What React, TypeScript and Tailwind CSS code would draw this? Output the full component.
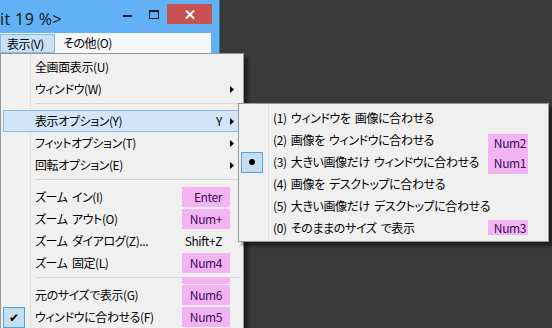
import type { ReactNode } from 'react';

type MenuRow =
  | { sep: true; pink?: boolean }
  | {
      sep?: false;
      label: string;
      shortcut?: string;
      pink?: boolean;
      arrow?: boolean;
      active?: boolean;
      check?: boolean;
    };

const font =
  "font-['Meiryo_UI','Noto_Sans_CJK_JP',sans-serif] [font-feature-settings:'palt'] tracking-[-0.4px] [word-spacing:2px] text-[12px] text-black";

const rows: MenuRow[] = [
  { label: '全画面表示(U)' },
  { label: 'ウィンドウ(W)', arrow: true },
  { sep: true },
  { label: '表示オプション(Y)', shortcut: 'Y', arrow: true, active: true },
  { label: 'フィットオプション(T)', arrow: true },
  { label: '回転オプション(E)', arrow: true },
  { sep: true },
  { label: 'ズーム イン(I)', shortcut: 'Enter', pink: true },
  { label: 'ズーム アウト(O)', shortcut: 'Num+', pink: true },
  { label: 'ズーム ダイアログ(Z)...', shortcut: 'Shift+Z' },
  { label: 'ズーム 固定(L)', shortcut: 'Num4', pink: true },
  { sep: true, pink: true },
  { label: '元のサイズで表示(G)', shortcut: 'Num6', pink: true },
  { label: 'ウィンドウに合わせる(F)', shortcut: 'Num5', pink: true, check: true },
  { sep: true },
];

// submenu of 表示オプション
const subRows = [
  { label: '(1) ウィンドウを 画像に合わせる' },
  { label: '(2) 画像を ウィンドウに合わせる', shortcut: 'Num2', pinkClass: 'mt-[4px] h-[18px]' },
  { label: '(3) 大きい画像だけ ウィンドウに合わせる', shortcut: 'Num1', pinkClass: 'h-[22px]', bullet: true },
  { label: '(4) 画像を デスクトップに合わせる' },
  { label: '(5) 大きい画像だけ デスクトップに合わせる' },
  { label: '(0) そのままのサイズ で表示', shortcut: 'Num3', pinkClass: 'mt-[2px] h-[15px]' },
];

const Arrow = () => (
  <svg width="4" height="7" viewBox="0 0 4 7" className="block">
    <polygon points="0,0 4,3.5 0,7" fill="#000" />
  </svg>
);

const TitleBar = () => (
  <div className="flex h-[33px] items-start bg-[#62b1f6]">
    <span className="mt-[9px] font-['Open_Sans',sans-serif] text-[16px] leading-[20px] tracking-[0.4px] text-[#111]">
      it 19 %&gt;
    </span>
    <div className="ml-auto flex items-start">
      {/* minimize */}
      <div className="mt-[15px] h-[2px] w-[9px] bg-[#1a1a1a]" />
      {/* maximize */}
      <div className="ml-[17px] mt-[10px] h-[9px] w-[10px] border border-t-2 border-[#1a1a1a]" />
      {/* close */}
      <div className="ml-[8px] mt-[4px] flex h-[20px] w-[45px] items-center justify-center bg-[#c75050]">
        <svg width="10" height="9" viewBox="0 0 10 9">
          <path d="M1 0.5 L9 8.5 M9 0.5 L1 8.5" stroke="#fff" strokeWidth="2" />
        </svg>
      </div>
      <div className="w-[7px]" />
    </div>
  </div>
);

const MenuBar = () => (
  <div className={`flex h-[20px] items-stretch bg-[#f5f6f8] ${font}`}>
    <div className="mt-px flex h-[19px] w-[55px] items-center border border-[#84b9eb] bg-[#c9e0f7] pl-[6px]">表示(V)</div>
    <div className="flex items-center pl-[8px]">その他(O)</div>
  </div>
);

const Separator = ({ pink }: { pink?: boolean }) => (
  <div className="relative h-[7px]">
    <div className="ml-[34px] mr-[2px] mt-[3px] h-px bg-[#d7d7d7]" />
    {pink && <div className="absolute left-[181px] top-0 h-full w-[48px] bg-[#f3b4f3]" />}
  </div>
);

const MainMenu = () => (
  <div
    className={`absolute left-0 top-[53px] h-[290px] w-[244px] border border-[#979797] bg-[#f0f0f0] pt-[2px] shadow-[4px_4px_3px_rgba(0,0,0,0.45)] ${font}`}
  >
    {/* gutter line */}
    <div className="absolute left-[29px] top-0 h-full w-px bg-[#e0e0e0]" />
    <div className="relative">
      {rows.map((r, i) =>
        r.sep ? (
          <Separator key={i} pink={r.pink} />
        ) : (
          <div
            key={i}
            className={`mx-[2px] flex h-[22px] items-center border ${
              r.active ? 'border-[#8bb9e6] bg-[#d3e5f6]' : 'border-transparent'
            }`}
          >
            <div className="flex h-full w-[31px] items-center">
              {r.check && (
                <span className="-ml-px flex h-[21px] w-[22px] items-center justify-center border border-[#4ea3e4] bg-[#c5dff1] text-[12px]">
                  ✔
                </span>
              )}
            </div>
            <div className="w-[147px] whitespace-nowrap">{r.label}</div>
            <div
              className={`flex h-full w-[48px] items-center justify-end pr-[8px] ${
                r.pink ? 'bg-[#f3b4f3] text-[#3d0a5c]' : ''
              }`}
            >
              {r.shortcut}
            </div>
            <div className="flex w-[10px] items-center">{r.arrow && <Arrow />}</div>
          </div>
        ),
      )}
    </div>
  </div>
);

const SubMenu = () => (
  <div
    className={`absolute left-[238px] top-[103px] h-[139px] w-[311px] border border-[#979797] bg-[#f0f0f0] pt-[3px] shadow-[4px_4px_3px_rgba(0,0,0,0.45)] ${font}`}
  >
    <div className="absolute left-[29px] top-0 h-full w-px bg-[#e0e0e0]" />
    <div className="relative">
      {subRows.map((r, i) => (
        <div key={i} className="mx-[2px] flex h-[22px] items-center border border-transparent">
          <div className="flex h-full w-[31px] items-center">
            {r.bullet && (
              <span className="-ml-px flex h-[21px] w-[22px] items-center justify-center border border-[#4ea3e4] bg-[#c5dff1]">
                <span className="h-[6px] w-[6px] rounded-full bg-black" />
              </span>
            )}
          </div>
          <div className="w-[215px] whitespace-nowrap">{r.label}</div>
          <div className="flex h-full w-[40px] items-start">
            {r.shortcut && (
              <span className={`flex w-full items-center justify-end bg-[#f3b4f3] pr-[2px] text-[#3d0a5c] ${r.pinkClass}`}>
                {r.shortcut}
              </span>
            )}
          </div>
        </div>
      ))}
    </div>
  </div>
);

const Window = ({ children }: { children: ReactNode }) => (
  <div className="w-[220px] border-r border-[#3d6f9c] bg-[#62b1f6] pr-[8px]">{children}</div>
);

export default function App() {
  return (
    <div className="relative h-[328px] w-[552px] overflow-hidden bg-[#3a3a3a]">
      <Window>
        <div className="-mr-[8px]">
          <TitleBar />
        </div>
        <MenuBar />
      </Window>
      <MainMenu />
      <SubMenu />
    </div>
  );
}
